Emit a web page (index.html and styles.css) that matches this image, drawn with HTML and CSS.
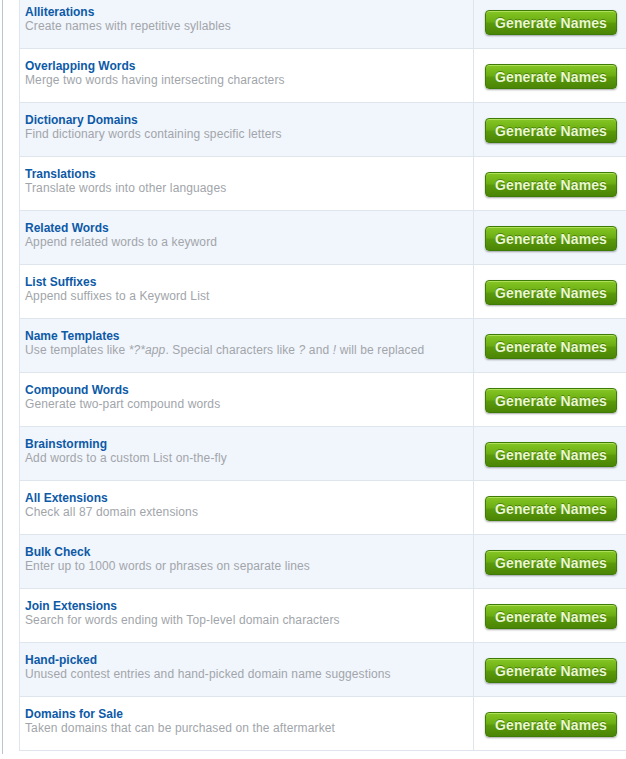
FILE: index.html
```html
<!DOCTYPE html>
<html>
<head>
<meta charset="utf-8">
<link rel="stylesheet" href="styles.css">
</head>
<body>
<div class="page">
  <div class="list">
    <div class="row alt"><div class="info"><div class="title">Alliterations</div><div class="desc">Create names with repetitive syllables</div></div><div class="action"><button class="btn">Generate Names</button></div></div>
    <div class="row"><div class="info"><div class="title">Overlapping Words</div><div class="desc">Merge two words having intersecting characters</div></div><div class="action"><button class="btn">Generate Names</button></div></div>
    <div class="row alt"><div class="info"><div class="title">Dictionary Domains</div><div class="desc">Find dictionary words containing specific letters</div></div><div class="action"><button class="btn">Generate Names</button></div></div>
    <div class="row"><div class="info"><div class="title">Translations</div><div class="desc">Translate words into other languages</div></div><div class="action"><button class="btn">Generate Names</button></div></div>
    <div class="row alt"><div class="info"><div class="title">Related Words</div><div class="desc">Append related words to a keyword</div></div><div class="action"><button class="btn">Generate Names</button></div></div>
    <div class="row"><div class="info"><div class="title">List Suffixes</div><div class="desc">Append suffixes to a Keyword List</div></div><div class="action"><button class="btn">Generate Names</button></div></div>
    <div class="row alt"><div class="info"><div class="title">Name Templates</div><div class="desc">Use templates like <em>*?*app</em>. Special characters like <em>?</em> and <em>!</em> will be replaced</div></div><div class="action"><button class="btn">Generate Names</button></div></div>
    <div class="row"><div class="info"><div class="title">Compound Words</div><div class="desc">Generate two-part compound words</div></div><div class="action"><button class="btn">Generate Names</button></div></div>
    <div class="row alt"><div class="info"><div class="title">Brainstorming</div><div class="desc">Add words to a custom List on-the-fly</div></div><div class="action"><button class="btn">Generate Names</button></div></div>
    <div class="row"><div class="info"><div class="title">All Extensions</div><div class="desc">Check all 87 domain extensions</div></div><div class="action"><button class="btn">Generate Names</button></div></div>
    <div class="row alt"><div class="info"><div class="title">Bulk Check</div><div class="desc">Enter up to 1000 words or phrases on separate lines</div></div><div class="action"><button class="btn">Generate Names</button></div></div>
    <div class="row"><div class="info"><div class="title">Join Extensions</div><div class="desc">Search for words ending with Top-level domain characters</div></div><div class="action"><button class="btn">Generate Names</button></div></div>
    <div class="row alt"><div class="info"><div class="title">Hand-picked</div><div class="desc">Unused contest entries and hand-picked domain name suggestions</div></div><div class="action"><button class="btn">Generate Names</button></div></div>
    <div class="row"><div class="info"><div class="title">Domains for Sale</div><div class="desc">Taken domains that can be purchased on the aftermarket</div></div><div class="action"><button class="btn">Generate Names</button></div></div>
  </div>
</div>
</body>
</html>
```

FILE: styles.css
```css
html, body {
  margin: 0;
  padding: 0;
  background: #ffffff;
  overflow: hidden;
}
body {
  font-family: "Liberation Sans", Arial, Helvetica, sans-serif;
  height: 759px;
}
.page {
  margin-left: 2px;
  border-left: 1px solid #b9c4d1;
  height: 759px;
  padding-left: 16px;
}
.list {
  margin-top: -5px;
  border-left: 1px solid #dfe5ec;
}
.row {
  display: flex;
  height: 53px;
  border-bottom: 1px solid #dfe5ec;
  background: #ffffff;
}
.row.alt {
  background: #f1f5fc;
}
.info {
  width: 448px;
  padding: 10px 0 0 5px;
  border-right: 1px solid #dfe5ec;
  line-height: 14px;
}
.title {
  font-size: 12px;
  font-weight: bold;
  color: #0d5aa7;
}
.desc {
  font-size: 12px;
  color: #a1a5aa;
  letter-spacing: 0.12px;
}
.desc em {
  font-style: italic;
}
.action {
  flex: 1;
  padding: 15px 0 0 11px;
}
.btn {
  display: block;
  width: 132px;
  height: 25px;
  margin: 0;
  padding: 1px 0 0 0;
  border: 1px solid #3f7c05;
  border-radius: 4px;
  background: linear-gradient(to bottom, #86c726 0%, #6cae12 45%, #5a990a 55%, #4b8506 100%);
  box-shadow: inset 0 1px 0 rgba(200, 240, 130, 0.6), 0 1px 2px rgba(0, 0, 0, 0.35);
  color: #e9f7d2;
  font-family: "Liberation Sans", Arial, Helvetica, sans-serif;
  font-size: 14px;
  font-weight: bold;
  letter-spacing: 0.1px;
  text-shadow: 0 -1px 0 rgba(30, 70, 0, 0.45);
  cursor: pointer;
}
```
